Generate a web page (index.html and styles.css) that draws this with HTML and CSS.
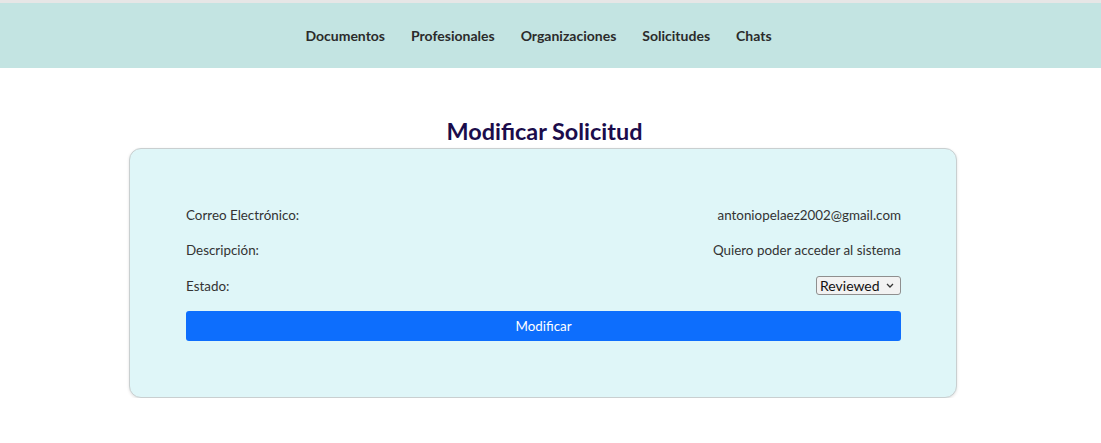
FILE: index.html
```html
<!DOCTYPE html>
<html lang="es">
<head>
<meta charset="utf-8">
<title>Modificar Solicitud</title>
<link rel="stylesheet" href="styles.css">
</head>
<body>
<header class="topbar">
  <nav class="nav">
    <a href="#">Documentos</a>
    <a href="#">Profesionales</a>
    <a href="#">Organizaciones</a>
    <a href="#">Solicitudes</a>
    <a href="#">Chats</a>
  </nav>
</header>
<main class="main">
  <h1 class="title">Modificar Solicitud</h1>
  <section class="card">
    <div class="row"><span>Correo Electrónico:</span><span>antoniopelaez2002@gmail.com</span></div>
    <div class="row"><span>Descripción:</span><span>Quiero poder acceder al sistema</span></div>
    <div class="row"><span>Estado:</span>
      <select class="select">
        <option>Reviewed</option>
        <option>Pending</option>
      </select>
    </div>
    <button class="btn">Modificar</button>
  </section>
</main>
</body>
</html>
```
FILE: styles.css
```css
* { box-sizing: border-box; }
body {
  margin: 0;
  font-family: "Lato", "Open Sans", sans-serif;
  color: #333;
  background: #fff;
  border-top: 3px solid #e6e6e6;
}
.topbar {
  background: #c3e4e2;
  height: 65px;
  display: flex;
  align-items: center;
  justify-content: center;
}
.nav {
  display: flex;
  gap: 26px;
  padding-right: 24px;
  margin-top: -1px;
}
.nav a {
  color: #2b2b2b;
  text-decoration: none;
  font-size: 14px;
  font-weight: 700;
}
.main {
  display: flex;
  flex-direction: column;
  align-items: center;
}
.title {
  margin: 48px 12px 2px 0;
  font-size: 23.4px;
  font-weight: 700;
  color: #1b0c4b;
  line-height: 30px;
}
.card {
  width: 828px;
  margin-left: -15px;
  background: #dff6f8;
  border: 1px solid #c9cfd0;
  border-radius: 12px;
  box-shadow: 0 1px 3px rgba(0,0,0,0.12);
  padding: 56px 55px 56px 56px;
  display: flex;
  flex-direction: column;
}
.row {
  display: flex;
  justify-content: space-between;
  align-items: center;
  height: 20px;
  margin-bottom: 15.3px;
  font-size: 13.4px;
}
.select {
  appearance: none;
  -webkit-appearance: none;
  font-family: inherit;
  font-size: 14px;
  height: 19px;
  min-height: 19px;
  width: 85px;
  padding: 0 16px 0 3px;
  color: #111;
  background: #f2f2f2 url("data:image/svg+xml,%3Csvg xmlns='http://www.w3.org/2000/svg' width='8' height='5' viewBox='0 0 8 5'%3E%3Cpath d='M1 1l3 3 3-3' fill='none' stroke='%23333' stroke-width='1.3'/%3E%3C/svg%3E") no-repeat right 6px center;
  border: 1px solid #8f8f8f;
  border-radius: 3px;
  line-height: 17px;
}
.btn {
  margin-top: 0;
  height: 30px;
  background: #0d6efd;
  color: #fff;
  border: none;
  border-radius: 3px;
  font-family: inherit;
  font-size: 13.4px;
}
```
